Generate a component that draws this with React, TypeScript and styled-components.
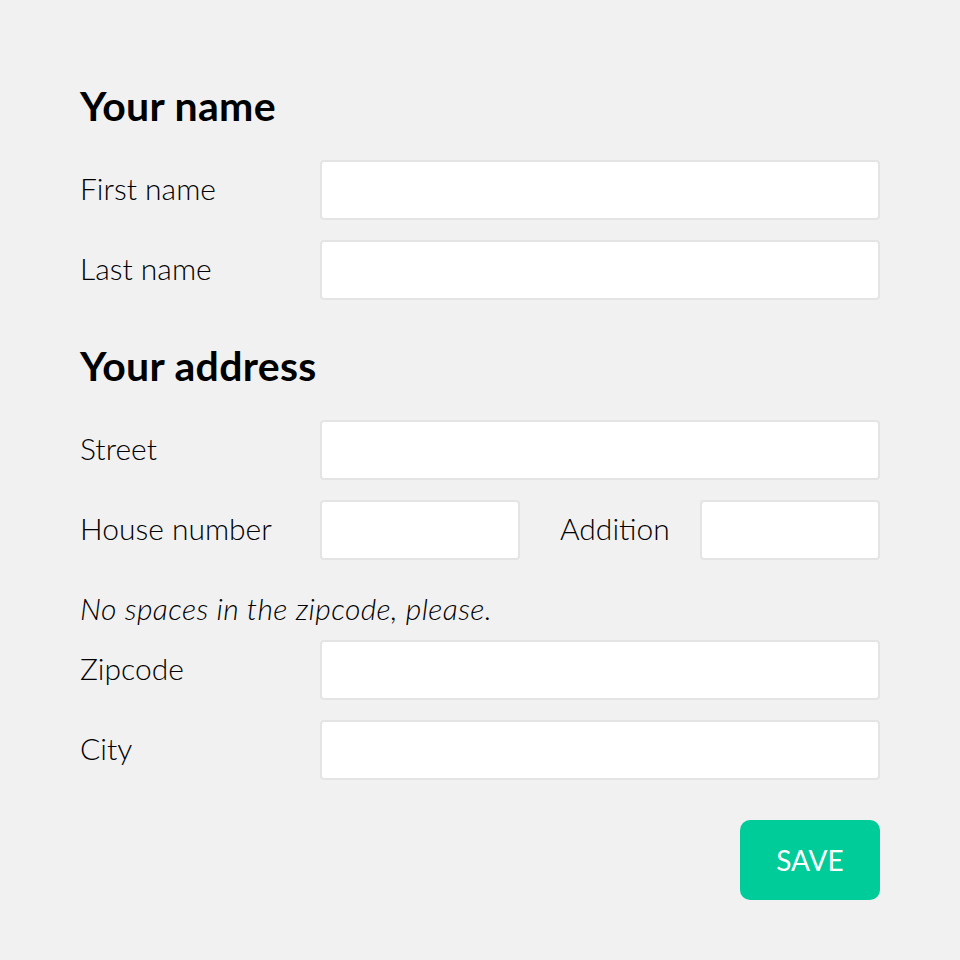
import * as React from 'react'
import styled, {createGlobalStyle} from 'styled-components'

const GlobalStyle = createGlobalStyle`
  html, body {
    margin: 0;
    padding: 0;
    background: #f1f1f1;
  }
  body {
    font-family: Lato, "Open Sans", "Liberation Sans", sans-serif;
    color: #000;
  }
`

const Page = styled.form`
  width: 960px;
  height: 960px;
  box-sizing: border-box;
  padding: 80px;
  display: flex;
  flex-direction: column;
`

const Section = styled.section`
  display: flex;
  flex-direction: column;
  gap: 20px;
  & + & {
    margin-top: 40px;
  }
`

const Heading = styled.h2`
  margin: 0;
  height: 60px;
  line-height: 52px;
  font-size: 41px;
  font-weight: 700;
  letter-spacing: 0.3px;
`

const Row = styled.div`
  display: flex;
  align-items: stretch;
  height: 60px;
`

const Label = styled.label<{$width?: number; $indent?: number}>`
  flex: 0 0 ${p => p.$width ?? 240}px;
  margin-left: ${p => p.$indent ?? 0}px;
  padding-bottom: 4px;
  font-size: 30px;
  font-weight: 300;
  line-height: 56px;
  white-space: nowrap;
`

const Input = styled.input<{$width?: number}>`
  box-sizing: border-box;
  height: 60px;
  flex: ${p => (p.$width ? `0 0 ${p.$width}px` : '1 1 auto')};
  min-width: 0;
  margin: 0;
  padding: 0 16px;
  border: 2px solid #e4e4e4;
  border-radius: 4px;
  background: #fff;
  font: inherit;
  font-size: 24px;
  outline: none;
`

const Note = styled.p`
  margin: 0;
  height: 40px;
  line-height: 56px;
  font-size: 30px;
  font-weight: 300;
  font-style: italic;
  letter-spacing: 0.4px;
  white-space: nowrap;
`

const Actions = styled.div`
  display: flex;
  justify-content: flex-end;
  margin-top: 40px;
`

const SaveButton = styled.button`
  width: 140px;
  height: 80px;
  border: none;
  border-radius: 10px;
  background: #00cc99;
  color: #fff;
  font-family: inherit;
  font-size: 28px;
  font-weight: 400;
  line-height: 76px;
  padding: 0;
  text-transform: uppercase;
  cursor: pointer;
`

export default function App() {
  return (
    <>
      <GlobalStyle />
      <Page onSubmit={e => e.preventDefault()}>
        <Section>
          <Heading>Your name</Heading>
          <Row>
            <Label htmlFor='first'>First name</Label>
            <Input id='first' />
          </Row>
          <Row>
            <Label htmlFor='last'>Last name</Label>
            <Input id='last' />
          </Row>
        </Section>
        <Section>
          <Heading>Your address</Heading>
          <Row>
            <Label htmlFor='street'>Street</Label>
            <Input id='street' />
          </Row>
          <Row>
            <Label htmlFor='house'>House number</Label>
            <Input id='house' $width={200} />
            <Label htmlFor='addition' $width={140} $indent={40}>Addition</Label>
            <Input id='addition' />
          </Row>
          <Note>No spaces in the zipcode, please.</Note>
          <Row>
            <Label htmlFor='zip'>Zipcode</Label>
            <Input id='zip' />
          </Row>
          <Row>
            <Label htmlFor='city'>City</Label>
            <Input id='city' />
          </Row>
        </Section>
        <Actions>
          <SaveButton type='submit'>Save</SaveButton>
        </Actions>
      </Page>
    </>
  )
}
